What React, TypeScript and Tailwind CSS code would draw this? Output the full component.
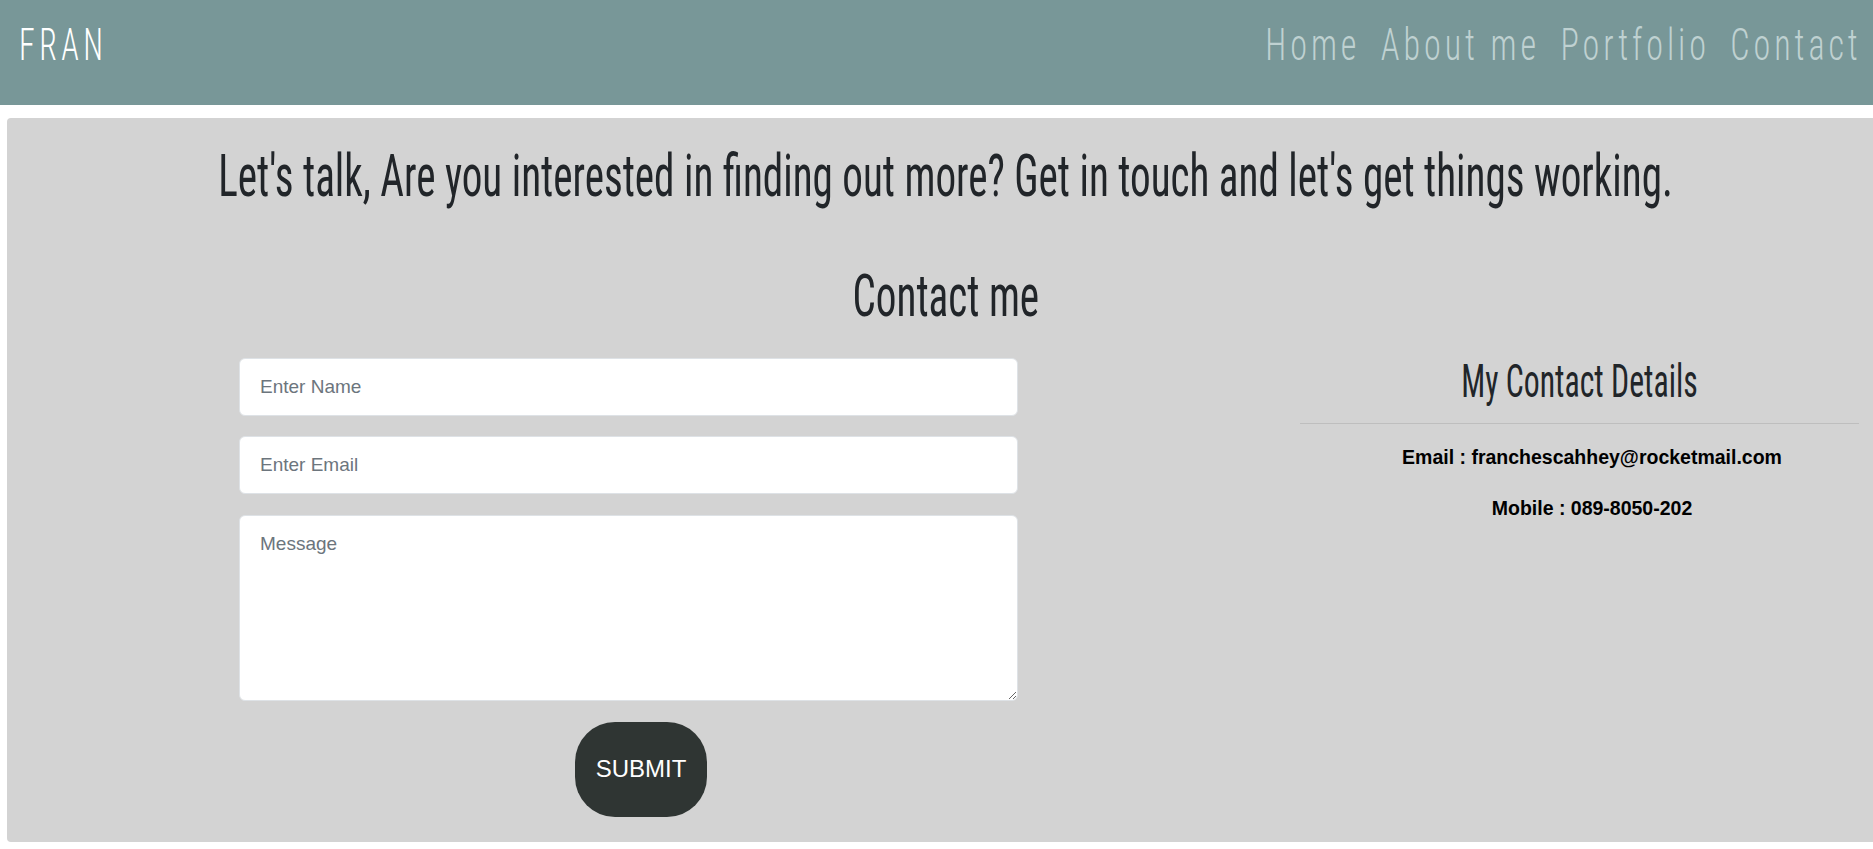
const cond = "font-['Roboto_Condensed','Liberation_Sans_Narrow',sans-serif]";
const arial = "font-['Liberation_Sans',Arial,sans-serif]";

export default function App() {
  const field =
    "block w-full bg-white border border-[#dee2e6] rounded-[6px] px-[20px] text-[19px] text-[#212529] placeholder:text-[#6c757d] outline-none " +
    arial;
  return (
    <div className="min-h-[849px] bg-white overflow-hidden">
      <header className="h-[105px] bg-[#789798] flex items-start pt-[22px]">
        <div
          className={`${cond} ml-[19px] text-[45px] leading-none font-light text-white tracking-[0.14em] origin-left scale-x-[0.71]`}
        >
          FRAN
        </div>
        <nav
          className={`${cond} ml-auto mr-[11px] flex gap-[27px] text-[45px] leading-none font-light text-[#bfd1d1] tracking-[0.115em] origin-right scale-x-[0.758]`}
        >
          <a href="#home">Home</a>
          <a href="#about">About me</a>
          <a href="#portfolio">Portfolio</a>
          <a href="#contact">Contact</a>
        </nav>
      </header>

      <main className="mt-[13px] ml-[7px] h-[724px] bg-[#d3d3d3] rounded-l-[4px] pt-[23px]">
        <div className="pl-[11px] flex justify-center">
          <h1
            className={`${cond} whitespace-nowrap text-[59px] leading-[1.2] font-normal text-[#212529] scale-x-[0.697]`}
          >
            Let's talk, Are you interested in finding out more? Get in touch and let's get things working.
          </h1>
        </div>
        <div className="mt-[49px] pl-[11px] flex justify-center">
          <h2
            className={`${cond} whitespace-nowrap text-[59px] leading-[1.2] font-normal text-[#212529] scale-x-[0.697]`}
          >
            Contact me
          </h2>
        </div>

        <div className="mt-[22px] flex items-start">
          <form className="ml-[232px] w-[779px] pt-[4px] flex flex-col" onSubmit={(e) => e.preventDefault()}>
            <input type="text" placeholder="Enter Name" className={`${field} h-[58px]`} />
            <input type="email" placeholder="Enter Email" className={`${field} h-[58px] mt-[20px]`} />
            <textarea
              placeholder="Message"
              className={`${field} h-[186px] mt-[21px] pt-[14px] leading-[1.5]`}
            />
            <button
              type="submit"
              className={`${arial} mt-[21px] ml-[336px] w-[132px] h-[95px] rounded-[40px] bg-[#2f3533] text-white text-[24px]`}
            >
              SUBMIT
            </button>
          </form>

          <div className="ml-[282px] w-[559px] text-center">
            <h3
              className={`${cond} text-[46px] leading-[1.2] font-normal text-[#212529] scale-x-[0.69]`}
            >
              My Contact Details
            </h3>
            <hr className="mt-[14px] border-0 border-t border-[#bebebe]" />
            <p className={`${arial} mt-[19px] pl-[25px] text-[19.5px] leading-[1.5] font-bold text-black`}>
              Email : franchescahhey@rocketmail.com
            </p>
            <p className={`${arial} mt-[22px] pl-[25px] text-[19.5px] leading-[1.5] font-bold text-black`}>
              Mobile : 089-8050-202
            </p>
          </div>
        </div>
      </main>
    </div>
  );
}
